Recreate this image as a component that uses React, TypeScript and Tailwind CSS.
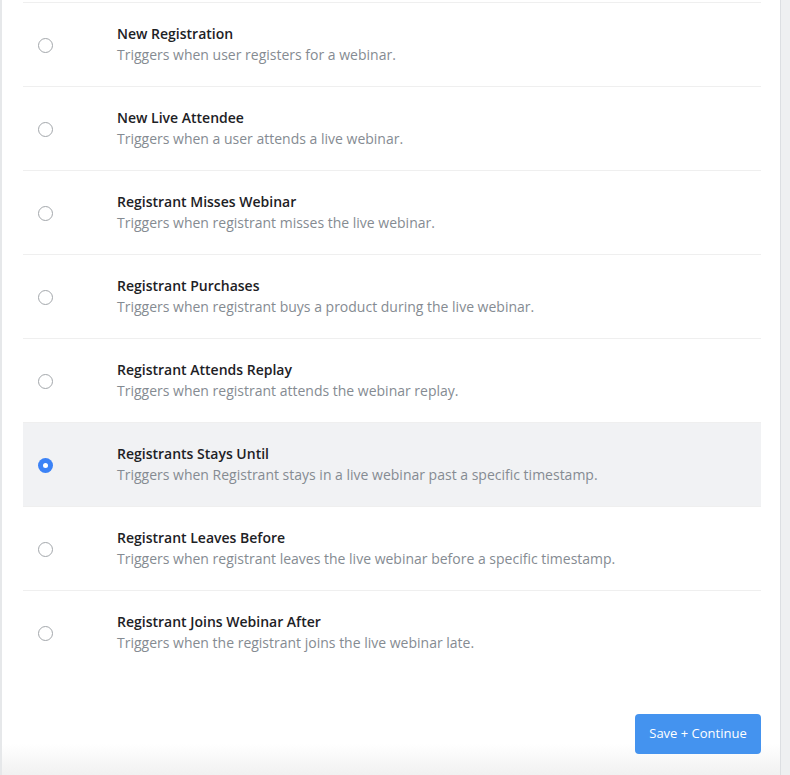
const triggers = [
  { title: "New Registration", desc: "Triggers when user registers for a webinar." },
  { title: "New Live Attendee", desc: "Triggers when a user attends a live webinar." },
  { title: "Registrant Misses Webinar", desc: "Triggers when registrant misses the live webinar." },
  { title: "Registrant Purchases", desc: "Triggers when registrant buys a product during the live webinar." },
  { title: "Registrant Attends Replay", desc: "Triggers when registrant attends the webinar replay." },
  { title: "Registrants Stays Until", desc: "Triggers when Registrant stays in a live webinar past a specific timestamp." },
  { title: "Registrant Leaves Before", desc: "Triggers when registrant leaves the live webinar before a specific timestamp." },
  { title: "Registrant Joins Webinar After", desc: "Triggers when the registrant joins the live webinar late." },
];

function Radio({ checked }: { checked: boolean }) {
  if (checked) {
    return (
      <span className="flex h-[15px] w-[15px] items-center justify-center rounded-full bg-[#3b82f6]">
        <span className="h-[5px] w-[5px] rounded-full bg-white" />
      </span>
    );
  }
  return <span className="block h-[15px] w-[15px] rounded-full border border-[#a3a7ab] bg-white" />;
}

export default function App() {
  const selected = 5;
  return (
    <div
      className="flex h-[775px] w-[790px] overflow-hidden bg-[#eef0f1]"
      style={{ fontFamily: '"Open Sans", "Noto Sans", sans-serif' }}
    >
      <div className="flex w-[781px] flex-col border-l-[2px] border-r border-l-[#e6e8ea] border-r-[#dcdfe2] bg-gradient-to-b from-white from-[96%] to-[#f1f1f1] pl-[21px] pr-[19px] pt-[2px]">
        <div className="flex flex-col">
          {triggers.map((t, i) => (
            <div
              key={t.title}
              className={`flex h-[84px] items-center border-t border-[#efefef] ${i === selected ? "bg-[#f1f2f4]" : ""}`}
            >
              <div className="mt-[2px] w-[94px] pl-[15px]">
                <Radio checked={i === selected} />
              </div>
              <div className="flex flex-col">
                <div className="text-[14px] leading-[20px] font-semibold text-[#1d2125]">{t.title}</div>
                <div className="text-[14px] leading-[21px] text-[#858b92]">{t.desc}</div>
              </div>
            </div>
          ))}
        </div>
        <div className="mt-[40px] flex justify-end">
          <button className="h-[40px] w-[126px] rounded-[4px] bg-[#4493ef] text-[13px] text-white">
            Save + Continue
          </button>
        </div>
      </div>
    </div>
  );
}
